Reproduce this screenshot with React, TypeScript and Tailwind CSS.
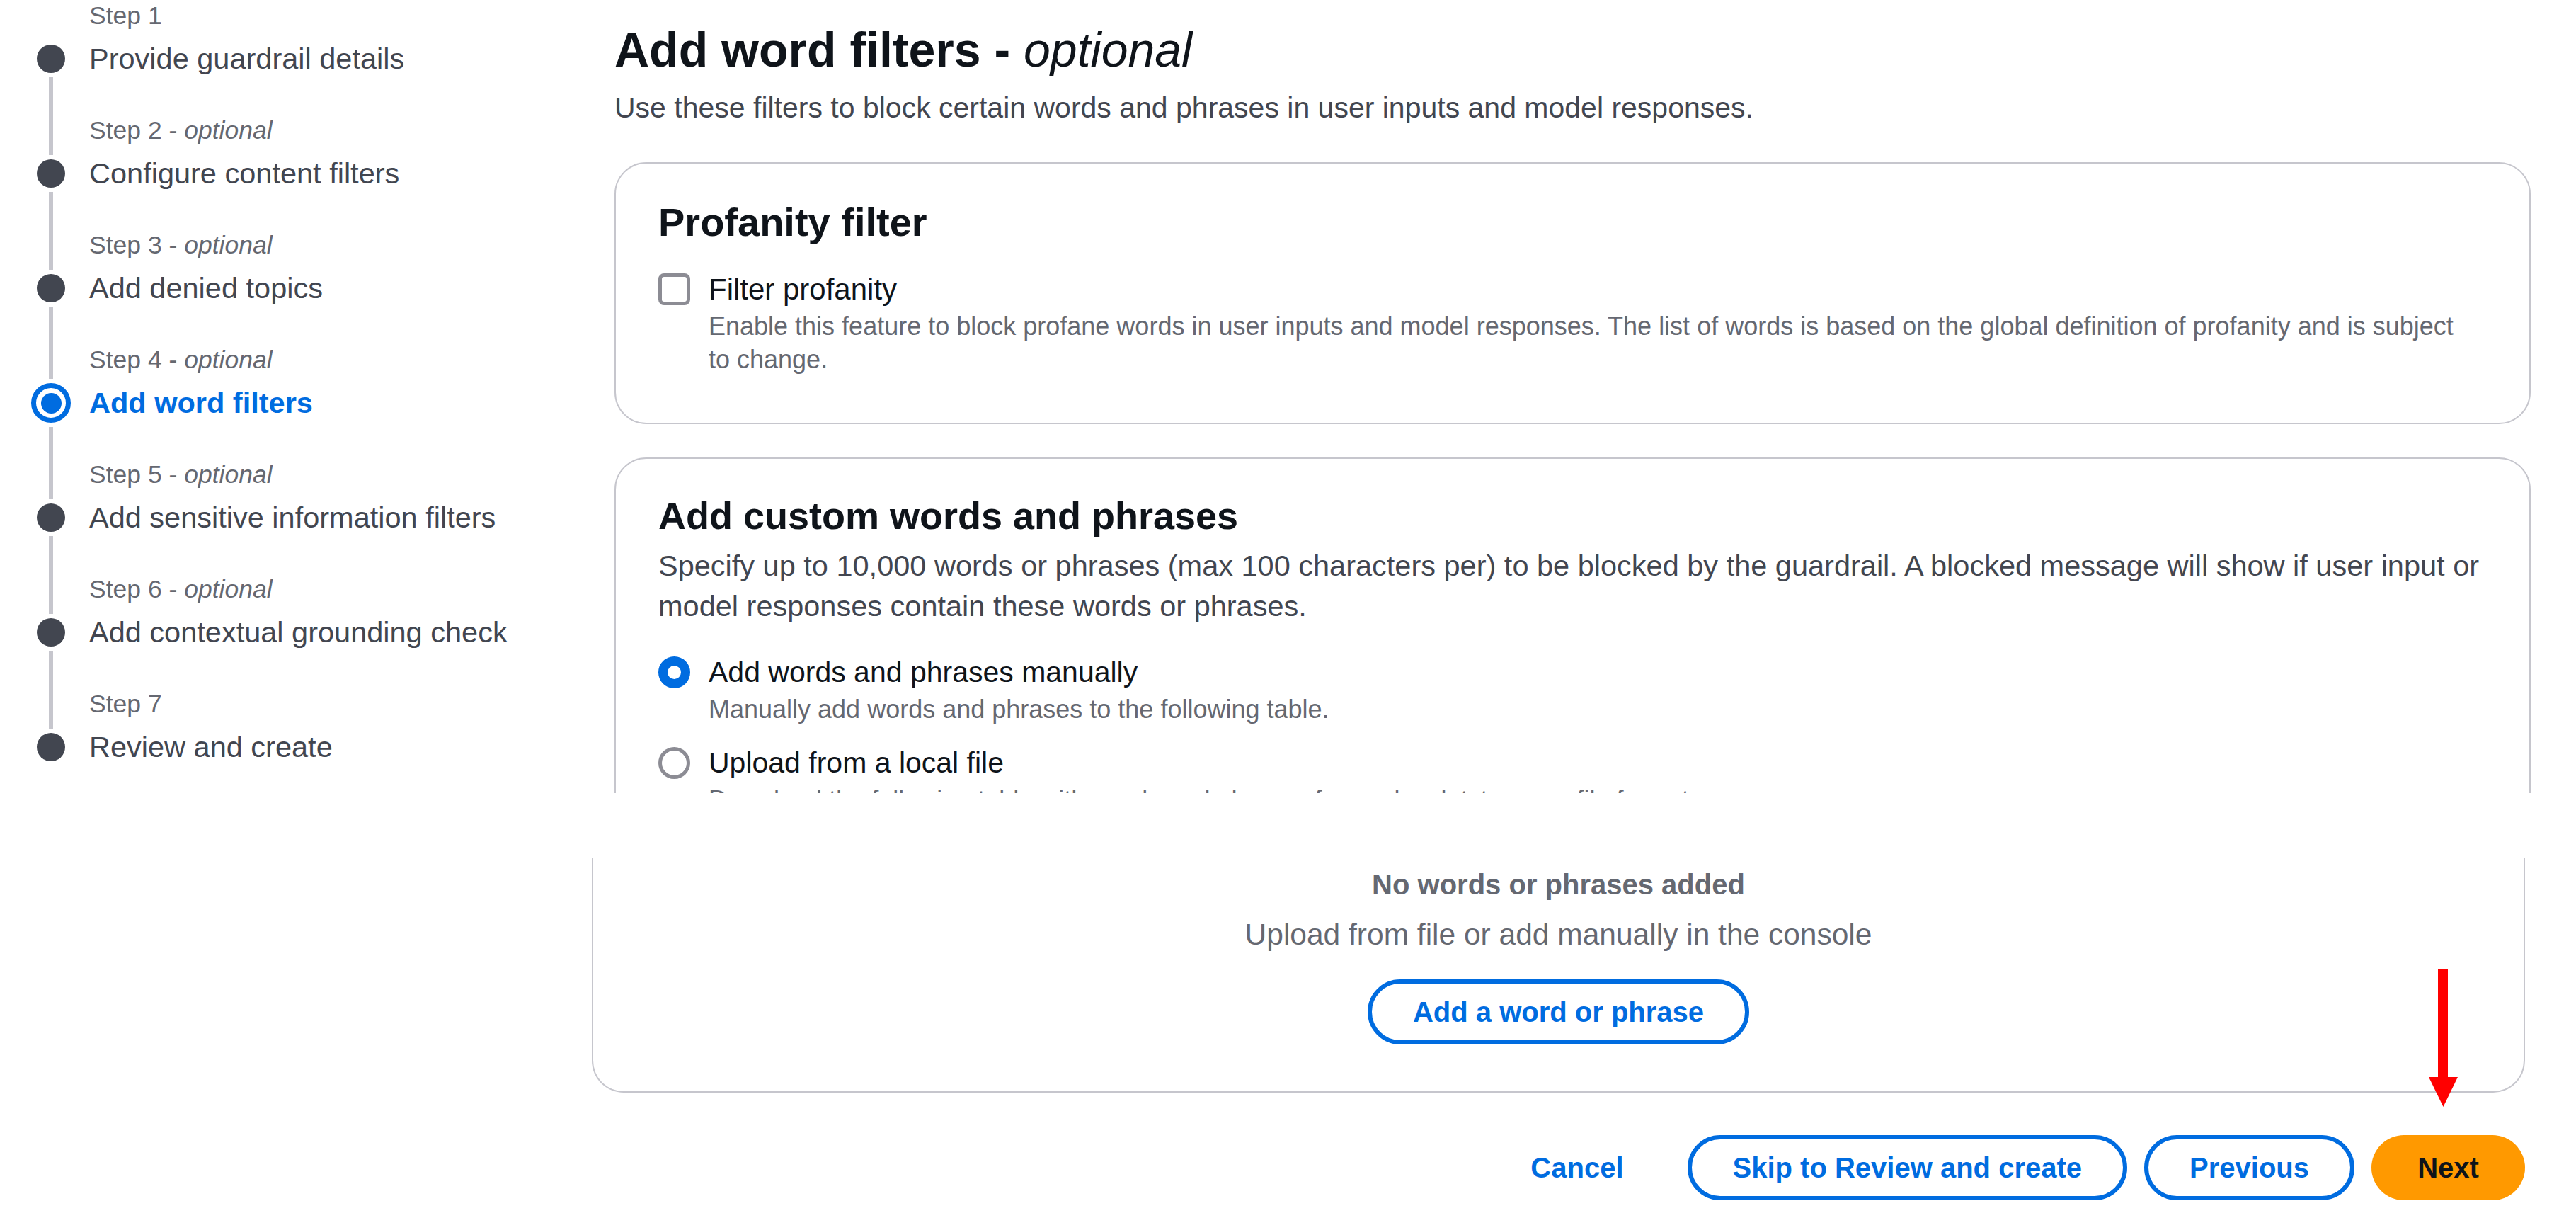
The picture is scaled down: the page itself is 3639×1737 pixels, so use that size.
import React from "react";

type Step = { label: string; optional: boolean; title: string; active?: boolean };

const steps: Step[] = [
  { label: "Step 1", optional: false, title: "Provide guardrail details" },
  { label: "Step 2", optional: true, title: "Configure content filters" },
  { label: "Step 3", optional: true, title: "Add denied topics" },
  { label: "Step 4", optional: true, title: "Add word filters", active: true },
  { label: "Step 5", optional: true, title: "Add sensitive information filters" },
  { label: "Step 6", optional: true, title: "Add contextual grounding check" },
  { label: "Step 7", optional: false, title: "Review and create" },
];

function StepItem({ step, first, last }: { step: Step; first: boolean; last: boolean }) {
  const active = !!step.active;
  return (
    <div className="flex gap-[26px]">
      <div className="flex w-[56px] shrink-0 flex-col items-center">
        <div className={`flex flex-col items-center ${active ? "h-[55px]" : "h-[63px]"}`}>
          {!first && <div className="mb-[6px] w-[6px] flex-1 bg-[#c6c6cd]" />}
        </div>
        {active ? (
          <div className="flex h-[56px] w-[56px] items-center justify-center rounded-full border-[7px] border-[#006ce0] bg-white">
            <div className="h-[29px] w-[29px] rounded-full bg-[#006ce0]" />
          </div>
        ) : (
          <div className="h-[40px] w-[40px] rounded-full bg-[#424650]" />
        )}
        <div className="flex flex-1 flex-col items-center">
          {!last && <div className="mt-[6px] w-[6px] flex-1 bg-[#c6c6cd]" />}
        </div>
      </div>
      <div className={last ? "" : "pb-[51px]"}>
        <div className="text-[35.5px] leading-[45px] text-[#656871]">
          {step.label}
          {step.optional && (
            <>
              {" - "}
              <i>optional</i>
            </>
          )}
        </div>
        <div
          className={`mt-[9px] whitespace-nowrap text-[41.5px] leading-[57px] ${
            active ? "font-bold text-[#006ce0]" : "text-[#424650]"
          }`}
        >
          {step.title}
        </div>
      </div>
    </div>
  );
}

function Radio({ checked }: { checked: boolean }) {
  return checked ? (
    <div className="mt-[6px] h-[45px] w-[45px] shrink-0 rounded-full border-[13px] border-[#006ce0] bg-white" />
  ) : (
    <div className="mt-[6px] h-[45px] w-[45px] shrink-0 rounded-full border-[5px] border-[#8c8c94] bg-white" />
  );
}

function OutlineButton({ children }: { children: React.ReactNode }) {
  return (
    <button className="flex h-[92px] items-center rounded-full border-[6px] border-[#006ce0] bg-white px-[58px] text-[40px] font-bold text-[#006ce0]">
      {children}
    </button>
  );
}

export default function App() {
  return (
    <div className="relative flex h-[1737px] w-[3639px] overflow-hidden bg-white font-['Liberation_Sans',Arial,sans-serif] text-[#0f141a]">
      {/* wizard navigation */}
      <nav className="w-[836px] shrink-0 pl-[44px]">
        {steps.map((s, i) => (
          <StepItem key={s.label} step={s} first={i === 0} last={i === steps.length - 1} />
        ))}
      </nav>

      <main className="flex w-[2739px] flex-col">
        <div className="h-[1120px] overflow-hidden pl-[32px] pt-[30px]">
          <h1 className="text-[68px] font-bold leading-[80px] text-[#0f141a]">
            Add word filters - <i className="font-normal">optional</i>
          </h1>
          <p className="mt-[14px] text-[41px] leading-[57px] text-[#424650]">
            Use these filters to block certain words and phrases in user inputs and model responses.
          </p>

          <section className="mt-[48px] rounded-[45px] border-2 border-[#c6c6cd] px-[60px] pb-[66px] pt-[49px]">
            <h2 className="text-[56px] font-bold leading-[68px]">Profanity filter</h2>
            <div className="mt-[32px] flex gap-[26px]">
              <div className="mt-[6px] h-[45px] w-[45px] shrink-0 rounded-[8px] border-[5px] border-[#8c8c94] bg-white" />
              <div>
                <div className="text-[42px] leading-[57px]">Filter profanity</div>
                <div className="text-[36px] leading-[47px] text-[#656871]">
                  Enable this feature to block profane words in user inputs and model responses. The list of words is based on the global definition of profanity and is subject
                  <br />
                  to change.
                </div>
              </div>
            </div>
          </section>

          <section className="mt-[47px] rounded-[45px] border-2 border-[#c6c6cd] px-[60px] pb-[66px] pt-[46px]">
            <h2 className="text-[54px] font-bold leading-[68px]">Add custom words and phrases</h2>
            <p className="mt-[8px] whitespace-nowrap text-[41.5px] leading-[57px] text-[#424650]">
              Specify up to 10,000 words or phrases (max 100 characters per) to be blocked by the guardrail. A blocked message will show if user input or
              <br />
              model responses contain these words or phrases.
            </p>
            <div className="mt-[37px] flex gap-[26px]">
              <Radio checked />
              <div>
                <div className="text-[41px] leading-[57px]">Add words and phrases manually</div>
                <div className="text-[36px] leading-[47px] text-[#656871]">
                  Manually add words and phrases to the following table.
                </div>
              </div>
            </div>
            <div className="mt-[24px] flex gap-[26px]">
              <Radio checked={false} />
              <div>
                <div className="text-[41px] leading-[57px]">Upload from a local file</div>
                <div className="text-[36px] leading-[47px] text-[#656871]">
                  Download the following table with words and phrases from a local .txt or .csv file format.
                </div>
              </div>
            </div>
          </section>
        </div>

        <div className="mr-[8px] mt-[91px] flex flex-col items-center rounded-b-[45px] border-2 border-t-0 border-[#c6c6cd] pb-[66px] pt-[10px]">
          <div className="text-[40px] font-bold leading-[57px] text-[#656871]">No words or phrases added</div>
          <div className="mt-[13px] text-[42.5px] leading-[57px] text-[#656871]">
            Upload from file or add manually in the console
          </div>
          <div className="mt-[35px]">
            <OutlineButton>Add a word or phrase</OutlineButton>
          </div>
        </div>

        <div className="mr-[8px] mt-[60px] flex items-center justify-end gap-[24px]">
          <button className="flex h-[92px] items-center px-[66px] text-[40px] font-bold text-[#006ce0]">Cancel</button>
          <OutlineButton>Skip to Review and create</OutlineButton>
          <OutlineButton>Previous</OutlineButton>
          <button className="flex h-[92px] w-[217px] items-center justify-center rounded-full bg-[#ff9900] text-[40px] font-bold text-[#0f141a]">
            Next
          </button>
        </div>
      </main>

      {/* annotation arrow */}
      <svg className="absolute left-[3431px] top-[1368px]" width="41" height="195" viewBox="0 0 41 195">
        <rect x="13" y="0" width="14" height="154" fill="#ff0000" />
        <polygon points="0,153 41,153 20.5,195" fill="#ff0000" />
      </svg>
    </div>
  );
}
